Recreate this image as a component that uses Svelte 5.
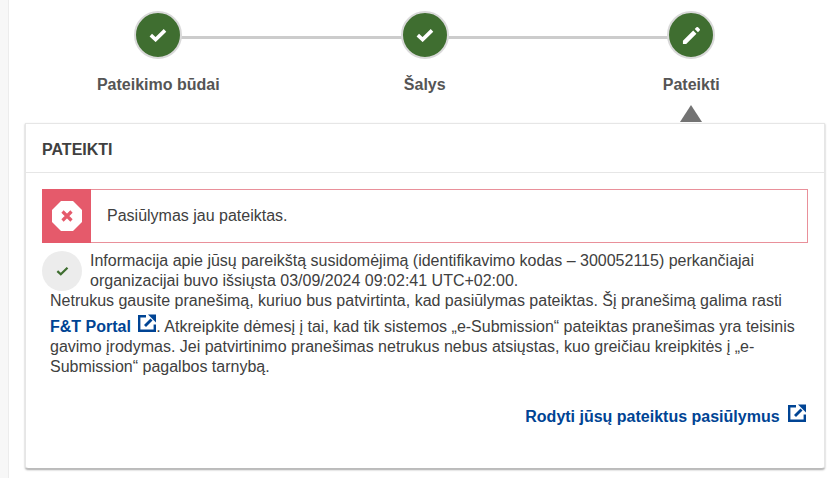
<script>
  const steps = [
    { label: 'Pateikimo būdai', icon: 'check' },
    { label: 'Šalys', icon: 'check' },
    { label: 'Pateikti', icon: 'pencil' }
  ];
</script>

{#snippet ext()}
  <svg class="ext" viewBox="0 0 18 18" aria-hidden="true">
    <path d="M8 2.2H1.2v14.6h15.6V10.5" fill="none" stroke="currentColor" stroke-width="2.4"/>
    <path d="M7 12 13.5 5.5" fill="none" stroke="currentColor" stroke-width="2.8"/>
    <path d="M10 0.5H18V8.5Z" fill="currentColor"/>
  </svg>
{/snippet}

<div class="page">
  <div class="content">
    <div class="steps">
      {#each steps as s, i}
        <div class="step">
          {#if i < steps.length - 1}<span class="line"></span>{/if}
          <span class="circle">
            {#if s.icon === 'check'}
              <svg viewBox="0 0 18 14" class="ic-check"><path d="M1.8 7.2 6.6 11.6 16 2.4" fill="none" stroke="#fff" stroke-width="3.6"/></svg>
            {:else}
              <svg viewBox="0 0 20 20" class="ic-pencil">
                <path d="M1 19V15.6L11.8 4.8 15.2 8.2 4.4 19Z" fill="#fff"/>
                <path d="M13.4 3.2 15.2 1.4a1.2 1.2 0 0 1 1.7 0L18.6 3.1a1.2 1.2 0 0 1 0 1.7L16.8 6.6Z" fill="#fff"/>
              </svg>
            {/if}
          </span>
          <span class="label">{s.label}</span>
          {#if s.icon === 'pencil'}<span class="arrow"></span>{/if}
        </div>
      {/each}
    </div>

    <section class="card">
      <h2 class="head">PATEIKTI</h2>
      <div class="body">
        <div class="alert">
          <div class="alert-icon">
            <svg viewBox="0 0 30 30" class="ic-stop">
              <path d="M9 0H21L30 9V21L21 30H9L0 21V9Z" fill="#fff"/>
              <path d="M10.5 10.5 19.5 19.5M19.5 10.5 10.5 19.5" stroke="#e55a6b" stroke-width="3.2" fill="none"/>
            </svg>
          </div>
          <div class="alert-text">Pasiūlymas jau pateiktas.</div>
        </div>

        <div class="info">
          <span class="round">
            <svg viewBox="0 0 18 14" class="ic-small"><path d="M1.8 7.2 6.6 11.6 16 2.4" fill="none" stroke="#3f6e30" stroke-width="3.2"/></svg>
          </span>
          <p class="first">Informacija apie jūsų pareikštą susidomėjimą (identifikavimo kodas – 300052115) perkančiajai organizacijai buvo išsiųsta 03/09/2024 09:02:41 UTC+02:00.</p>
          <p class="rest">Netrukus gausite pranešimą, kuriuo bus patvirtinta, kad pasiūlymas pateiktas. Šį pranešimą galima rasti <a class="link portal" href="#top">F&amp;T Portal {@render ext()}</a>. Atkreipkite dėmesį į tai, kad tik sistemos „e-Submission“ pateiktas pranešimas yra teisinis gavimo įrodymas. Jei patvirtinimo pranešimas netrukus nebus atsiųstas, kuo greičiau kreipkitės į „e-Submission“ pagalbos tarnybą.</p>
        </div>

        <div class="foot">
          <a class="link" href="#top">Rodyti jūsų pateiktus pasiūlymus {@render ext()}</a>
        </div>
      </div>
    </section>
  </div>
</div>

<style>
  :global(body) {
    margin: 0;
    background: #fff;
  }
  .page {
    width: 835px;
    height: 478px;
    box-sizing: border-box;
    overflow: hidden;
    font-family: "Liberation Sans", Arial, sans-serif;
    font-size: 16px;
    color: #404040;
    background: #fff;
    border-left: 8px solid #f7f7f7;
    box-shadow: inset 1px 0 0 #ececec;
  }
  .content {
    padding: 11px 10px 0 17px;
  }
  .steps {
    display: grid;
    grid-template-columns: repeat(3, 266.5px);
    height: 112px;
  }
  .step {
    position: relative;
    display: flex;
    flex-direction: column;
    align-items: center;
    height: 112px;
  }
  .line {
    position: absolute;
    top: 25px;
    left: 50%;
    width: 100%;
    height: 3px;
    background: #ccc;
  }
  .circle {
    position: relative;
    box-sizing: border-box;
    width: 48px;
    height: 48px;
    border-radius: 50%;
    background: #3f6e30;
    border: 2px solid #d9d9d9;
    display: flex;
    align-items: center;
    justify-content: center;
    flex: none;
  }
  .ic-check { width: 18px; height: 14px; }
  .ic-pencil { width: 19px; height: 19px; }
  .label {
    margin-top: 16px;
    font-weight: 700;
    line-height: 20px;
    color: #555;
  }
  .arrow {
    position: absolute;
    left: 50%;
    margin-left: -11px;
    bottom: 1px;
    width: 0;
    height: 0;
    border-left: 11px solid transparent;
    border-right: 11px solid transparent;
    border-bottom: 17px solid #737373;
  }
  .card {
    width: 800px;
    height: 346px;
    box-sizing: border-box;
    border: 1px solid #e6e6e6;
    border-bottom-color: #bbb;
    border-radius: 0 0 3px 3px;
    box-shadow: 0 1px 2px rgba(0,0,0,.35);
    background: #fff;
  }
  .head {
    margin: 0;
    height: 49px;
    box-sizing: border-box;
    padding: 17px 16px 0;
    font-size: 16px;
    line-height: 18px;
    font-weight: 700;
    color: #404040;
    border-bottom: 1px solid #e6e6e6;
  }
  .body {
    padding: 16px 16px 0;
  }
  .alert {
    display: flex;
    height: 54px;
    box-sizing: border-box;
    border: 1px solid #e9909a;
  }
  .alert-icon {
    width: 49px;
    margin: -1px 0 -1px -1px;
    background: #e55a6b;
    display: flex;
    align-items: center;
    justify-content: center;
  }
  .ic-stop { width: 30px; height: 30px; }
  .alert-text {
    padding-left: 16px;
    line-height: 52px;
  }
  .info {
    margin-top: 8px;
    line-height: 20px;
  }
  .round {
    float: left;
    width: 40px;
    height: 40px;
    margin: 0 8px 0 0;
    border-radius: 50%;
    background: #ececec;
    display: flex;
    align-items: center;
    justify-content: center;
  }
  .ic-small { width: 13px; height: 10px; }
  .info p { margin: 0; }
  .rest { padding-left: 8px; }
  .link {
    color: #004494;
    font-weight: 700;
    text-decoration: none;
  }
  .ext {
    display: inline-block;
    width: 18px;
    height: 18px;
    vertical-align: 0;
    margin-left: 3px;
  }
  .portal .ext { margin-top: 2.5px; }
  .foot {
    margin-top: 27px;
    padding-right: 2px;
    text-align: right;
  }
  .foot .ext { margin-left: 4px; }
</style>
